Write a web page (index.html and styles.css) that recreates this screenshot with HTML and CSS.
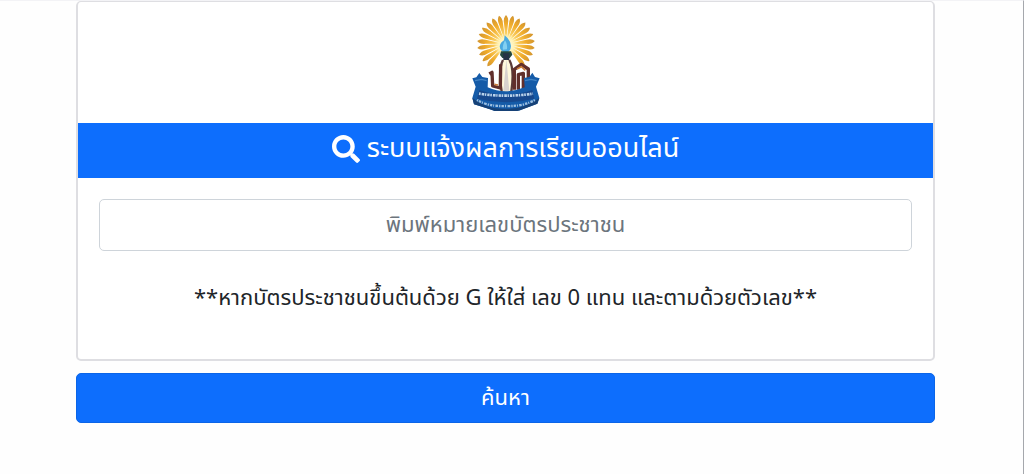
FILE: index.html
```html
<!DOCTYPE html>
<html lang="th">
<head>
    <meta charset="UTF-8">
    <meta name="viewport" content="width=device-width, initial-scale=1.0">
    <title>ระบบแจ้งผลการเรียนออนไลน์</title>
    <link rel="stylesheet" href="styles.css">
</head>
<body>
    <form class="container">
        <div class="card">
            <div class="logo">
                <svg viewBox="33 36 216 300" width="72" height="100" role="img" aria-label="ตราโรงเรียน">
                    <defs>
                        <linearGradient id="rayFill" x1="0" y1="0" x2="0" y2="1">
                            <stop offset="0" stop-color="#d1942f"/>
                            <stop offset="0.4" stop-color="#f0ac2c"/>
                            <stop offset="1" stop-color="#ffdf7a"/>
                        </linearGradient>
                        <radialGradient id="glow">
                            <stop offset="0" stop-color="#ffffff"/>
                            <stop offset="0.6" stop-color="#fff3b8"/>
                            <stop offset="1" stop-color="#fff3b8" stop-opacity="0"/>
                        </radialGradient>
                        <path id="ray" d="M141 45 Q150 54 147 70 L143 112 L139 112 L135 70 Q132 54 141 45Z" fill="url(#rayFill)"/>
                    </defs>
                    <!-- rays -->
                    <use href="#ray"/>
                    <use href="#ray" transform="rotate(14 141 132)"/>
                    <use href="#ray" transform="rotate(28 141 132)"/>
                    <use href="#ray" transform="rotate(42 141 132)"/>
                    <use href="#ray" transform="rotate(56 141 132)"/>
                    <use href="#ray" transform="rotate(70 141 132)"/>
                    <use href="#ray" transform="rotate(84 141 132)"/>
                    <use href="#ray" transform="rotate(98 141 132)"/>
                    <use href="#ray" transform="rotate(112 141 132)"/>
                    <use href="#ray" transform="rotate(126 141 132)"/>
                    <use href="#ray" transform="rotate(140 141 132)"/>
                    <use href="#ray" transform="rotate(-14 141 132)"/>
                    <use href="#ray" transform="rotate(-28 141 132)"/>
                    <use href="#ray" transform="rotate(-42 141 132)"/>
                    <use href="#ray" transform="rotate(-56 141 132)"/>
                    <use href="#ray" transform="rotate(-70 141 132)"/>
                    <use href="#ray" transform="rotate(-84 141 132)"/>
                    <use href="#ray" transform="rotate(-98 141 132)"/>
                    <use href="#ray" transform="rotate(-112 141 132)"/>
                    <use href="#ray" transform="rotate(-126 141 132)"/>
                    <use href="#ray" transform="rotate(-140 141 132)"/>
                    <circle cx="141" cy="136" r="36" fill="url(#glow)"/>
                    <!-- flame and stand -->
                    <path d="M137 106 Q155 120 156 138 Q155 156 140 158 Q123 155 122 139 Q124 127 135 121Z" fill="#4aa9df"/>
                    <path d="M138 121 Q146 132 144 148 L132 149 Q129 138 138 121Z" fill="#83d0f1"/>
                    <path d="M126 154 H156 L160 164 L152 174 H130 L123 165Z" fill="#24483f"/>
                    <path d="M132 160 H151 V181 H133Z" fill="#263346"/>
                    <path d="M133 180 Q112 205 121 276 H163 Q173 209 151 180Z" fill="#fff8dc"/>
                    <path d="M132 180 Q117 208 128 274 M151 180 Q167 208 157 274" fill="none" stroke="#5a3b3a" stroke-width="7"/>
                    <path d="M142 178 L133 272 H151Z" fill="#d8d2ce"/>
                    <!-- monogram strokes -->
                    <g fill="none" stroke="#612f2b" stroke-width="10" stroke-linejoin="round">
                        <path d="M91 222 L99 217 L101 258 L124 264 L125 193"/>
                        <path d="M166 269 V208 L187 193 L208 207 V248"/>
                        <path d="M178 269 V224 L193 220 V269"/>
                    </g>
                    <path d="M174 207 L187 200 L199 211 M106 253 L117 255" fill="none" stroke="#c97b38" stroke-width="5"/>
                    <!-- ribbon -->
                    <path d="M40 235 L52 232 L61 219 L70 231 L87 234 L86 262 Q139 286 197 262 L195 234 L211 231 L220 218 L228 231 L242 235 L231 260 L241 294 L235 311 Q188 329 174 333 H107 Q91 327 45 313 L40 294 L50 260Z" fill="#155ba8"/>
                    <path d="M61 270 Q139 298 220 270 L226 296 Q141 317 54 296Z" fill="#17488d"/>
                    <path d="M40 294 L45 313 Q91 327 107 333 H174 Q188 329 235 311 L241 294 Q186 331 141 326 Q90 331 40 294Z" fill="#164176"/>
                    <path d="M48 242 L68 238 L83 242 M198 242 L216 238 L233 242" fill="none" stroke="#4384c4" stroke-width="4"/>
                    <path d="M60 281 Q140 293 222 281" fill="none" stroke="#b9d3ec" stroke-width="8" stroke-dasharray="5 3 8 2 4 3 7 2"/>
                    <path d="M54 300 Q88 320 141 318 Q191 320 228 300" fill="none" stroke="#9dbfdf" stroke-width="7" stroke-dasharray="4 3 7 3 3 4 8 3"/>
                </svg>
            </div>
            <h1 class="card-title">
                <svg class="search-icon" viewBox="0 0 512 512" aria-hidden="true">
                    <path fill="currentColor" d="M505 442.700 405.300 343c-4.500-4.500-10.600-7-17-7H372c27.600-35.300 44-79.700 44-128C416 93.100 322.900 0 208 0S0 93.100 0 208s93.100 208 208 208c48.300 0 92.700-16.400 128-44v16.300c0 6.400 2.500 12.500 7 17l99.700 99.700c9.400 9.400 24.600 9.400 33.900 0l28.300-28.300c9.400-9.400 9.400-24.600.1-34zM208 336c-70.700 0-128-57.200-128-128 0-70.700 57.200-128 128-128 70.700 0 128 57.200 128 128 0 70.700-57.200 128-128 128z"/>
                </svg>
                <span>ระบบแจ้งผลการเรียนออนไลน์</span>
            </h1>
            <div class="card-body">
                <input class="form-control" type="text" id="idCard" aria-label="พิมพ์หมายเลขบัตรประชาชน" placeholder="พิมพ์หมายเลขบัตรประชาชน">
                <p class="note">**หากบัตรประชาชนขึ้นต้นด้วย G ให้ใส่ เลข 0 แทน และตามด้วยตัวเลข**</p>
            </div>
        </div>
        <button class="btn" type="submit">ค้นหา</button>
    </form>
</body>
</html>
```
FILE: styles.css
```css
* {
    margin: 0;
    padding: 0;
    box-sizing: border-box;
}

body {
    font-family: 'Noto Sans Thai', 'Noto Sans', sans-serif;
    font-size: 22px;
    color: #212529;
    background: #fefefe;
    min-height: 100vh;
    padding-right: 12px;
    border-top: 1px solid #f3f3f6;
    border-right: 1px solid #a5a8ad;
}

.container {
    width: 85%;
    margin: 0 auto;
}

.card {
    background: white;
    border: 2px solid #dedee2;
    border-top-width: 1px;
    border-radius: 5px;
    margin-bottom: 12px;
}

.logo {
    display: flex;
    justify-content: center;
    padding: 10px 0 11px;
}

.card-title {
    display: flex;
    align-items: center;
    justify-content: center;
    gap: 7px;
    height: 55px;
    padding-bottom: 4px;
    background: #0d6efd;
    color: white;
    font-size: 27px;
    font-weight: 400;
}

.search-icon {
    width: 28px;
    height: 28px;
}

.card-body {
    padding: 21px 21px 44px;
    text-align: center;
}

.form-control {
    width: 100%;
    height: 52px;
    border: 1px solid #ced4da;
    border-radius: 5px;
    background: white;
    font-family: inherit;
    font-size: 22px;
    text-align: center;
}

.form-control::placeholder {
    color: #6c757d;
}

.note {
    margin-top: 32px;
    line-height: 32px;
}

.btn {
    display: block;
    width: 100%;
    height: 50px;
    border: 1px solid #0b65e8;
    border-radius: 5px;
    background: #0d6efd;
    color: white;
    font-family: inherit;
    font-size: 22px;
    font-weight: 400;
    cursor: pointer;
}
```
